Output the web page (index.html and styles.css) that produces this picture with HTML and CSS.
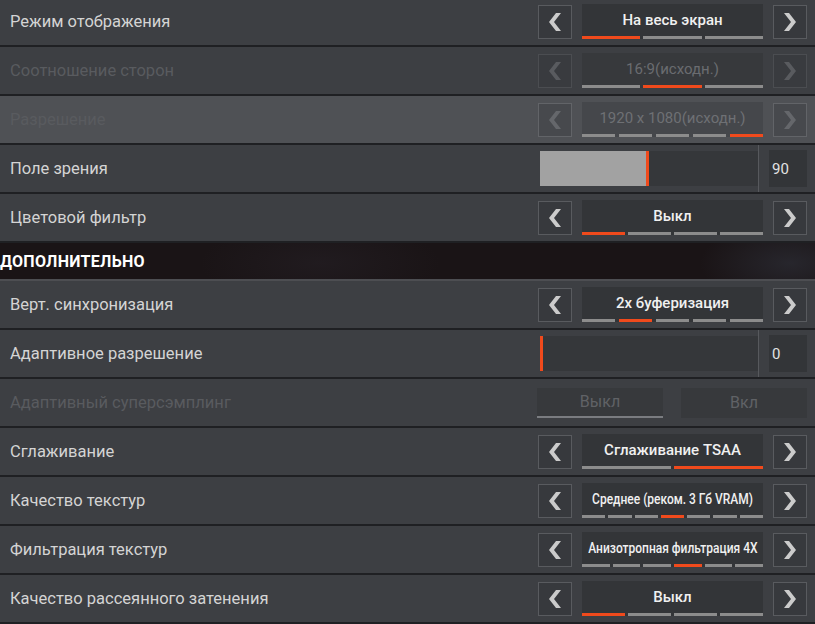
FILE: index.html
```html
<!DOCTYPE html>
<html lang="ru">
<head>
<meta charset="utf-8">
<title>Настройки видео</title>
<link rel="stylesheet" href="styles.css">
</head>
<body>
<div class="list">

  <div class="row">
    <span class="label">Режим отображения</span>
    <div class="cycle">
      <div class="arrow"><svg viewBox="0 0 12 18" width="12" height="18"><polygon points="12,0 7,0 0,9 7,18 12,18 5,9"/></svg></div>
      <div class="value"><span class="vtext">На весь экран</span><div class="segs"><i class="on"></i><i></i><i></i></div></div>
      <div class="arrow"><svg viewBox="0 0 12 18" width="12" height="18"><polygon points="0,0 5,0 12,9 5,18 0,18 7,9"/></svg></div>
    </div>
  </div>

  <div class="row dis">
    <span class="label">Соотношение сторон</span>
    <div class="cycle">
      <div class="arrow"><svg viewBox="0 0 12 18" width="12" height="18"><polygon points="12,0 7,0 0,9 7,18 12,18 5,9"/></svg></div>
      <div class="value"><span class="vtext">16:9(исходн.)</span><div class="segs"><i></i><i class="on"></i><i></i></div></div>
      <div class="arrow"><svg viewBox="0 0 12 18" width="12" height="18"><polygon points="0,0 5,0 12,9 5,18 0,18 7,9"/></svg></div>
    </div>
  </div>

  <div class="row dis hl">
    <span class="label">Разрешение</span>
    <div class="cycle">
      <div class="arrow"><svg viewBox="0 0 12 18" width="12" height="18"><polygon points="12,0 7,0 0,9 7,18 12,18 5,9"/></svg></div>
      <div class="value"><span class="vtext">1920 x 1080(исходн.)</span><div class="segs wide"><i></i><i></i><i></i><i></i><i class="on"></i></div></div>
      <div class="arrow"><svg viewBox="0 0 12 18" width="12" height="18"><polygon points="0,0 5,0 12,9 5,18 0,18 7,9"/></svg></div>
    </div>
  </div>

  <div class="row">
    <span class="label">Поле зрения</span>
    <div class="slider">
      <div class="track"><div class="fill" style="width:106px"></div><div class="thumb"></div></div>
      <div class="divider"></div>
      <div class="sval">90</div>
    </div>
  </div>

  <div class="row">
    <span class="label">Цветовой фильтр</span>
    <div class="cycle">
      <div class="arrow"><svg viewBox="0 0 12 18" width="12" height="18"><polygon points="12,0 7,0 0,9 7,18 12,18 5,9"/></svg></div>
      <div class="value"><span class="vtext">Выкл</span><div class="segs"><i class="on"></i><i></i><i></i><i></i></div></div>
      <div class="arrow"><svg viewBox="0 0 12 18" width="12" height="18"><polygon points="0,0 5,0 12,9 5,18 0,18 7,9"/></svg></div>
    </div>
  </div>

  <div class="head"><span>ДОПОЛНИТЕЛЬНО</span></div>

  <div class="row">
    <span class="label">Верт. синхронизация</span>
    <div class="cycle">
      <div class="arrow"><svg viewBox="0 0 12 18" width="12" height="18"><polygon points="12,0 7,0 0,9 7,18 12,18 5,9"/></svg></div>
      <div class="value"><span class="vtext">2x буферизация</span><div class="segs wide"><i></i><i class="on"></i><i></i><i></i><i></i></div></div>
      <div class="arrow"><svg viewBox="0 0 12 18" width="12" height="18"><polygon points="0,0 5,0 12,9 5,18 0,18 7,9"/></svg></div>
    </div>
  </div>

  <div class="row">
    <span class="label">Адаптивное разрешение</span>
    <div class="slider">
      <div class="track"><div class="fill" style="width:0px"></div><div class="thumb"></div></div>
      <div class="divider"></div>
      <div class="sval">0</div>
    </div>
  </div>

  <div class="row dis">
    <span class="label">Адаптивный суперсэмплинг</span>
    <div class="toggle">
      <div class="tbtn sel">Выкл</div>
      <div class="tbtn">Вкл</div>
    </div>
  </div>

  <div class="row">
    <span class="label">Сглаживание</span>
    <div class="cycle">
      <div class="arrow"><svg viewBox="0 0 12 18" width="12" height="18"><polygon points="12,0 7,0 0,9 7,18 12,18 5,9"/></svg></div>
      <div class="value"><span class="vtext">Сглаживание TSAA</span><div class="segs"><i></i><i class="on"></i></div></div>
      <div class="arrow"><svg viewBox="0 0 12 18" width="12" height="18"><polygon points="0,0 5,0 12,9 5,18 0,18 7,9"/></svg></div>
    </div>
  </div>

  <div class="row">
    <span class="label">Качество текстур</span>
    <div class="cycle">
      <div class="arrow"><svg viewBox="0 0 12 18" width="12" height="18"><polygon points="12,0 7,0 0,9 7,18 12,18 5,9"/></svg></div>
      <div class="value"><span class="vtext"><span class="cond">Среднее (реком. 3 Гб VRAM)</span></span><div class="segs"><i></i><i></i><i></i><i class="on"></i><i></i><i></i><i></i></div></div>
      <div class="arrow"><svg viewBox="0 0 12 18" width="12" height="18"><polygon points="0,0 5,0 12,9 5,18 0,18 7,9"/></svg></div>
    </div>
  </div>

  <div class="row">
    <span class="label">Фильтрация текстур</span>
    <div class="cycle">
      <div class="arrow"><svg viewBox="0 0 12 18" width="12" height="18"><polygon points="12,0 7,0 0,9 7,18 12,18 5,9"/></svg></div>
      <div class="value"><span class="vtext"><span class="cond">Анизотропная фильтрация 4X</span></span><div class="segs"><i></i><i></i><i></i><i class="on"></i><i></i><i></i></div></div>
      <div class="arrow"><svg viewBox="0 0 12 18" width="12" height="18"><polygon points="0,0 5,0 12,9 5,18 0,18 7,9"/></svg></div>
    </div>
  </div>

  <div class="row">
    <span class="label">Качество рассеянного затенения</span>
    <div class="cycle">
      <div class="arrow"><svg viewBox="0 0 12 18" width="12" height="18"><polygon points="12,0 7,0 0,9 7,18 12,18 5,9"/></svg></div>
      <div class="value"><span class="vtext">Выкл</span><div class="segs"><i class="on"></i><i></i><i></i><i></i></div></div>
      <div class="arrow"><svg viewBox="0 0 12 18" width="12" height="18"><polygon points="0,0 5,0 12,9 5,18 0,18 7,9"/></svg></div>
    </div>
  </div>

</div>
</body>
</html>
```

FILE: styles.css
```css
html, body {
  margin: 0;
  padding: 0;
}
body {
  width: 815px;
  height: 624px;
  overflow: hidden;
  background: #1e1f22;
  font-family: Roboto, "Liberation Sans", sans-serif;
}
.list {
  margin-top: -2px;
}
.row {
  display: flex;
  align-items: center;
  justify-content: space-between;
  height: 47px;
  border-bottom: 2px solid #1f2023;
  background: #3d3f43;
  padding: 0 8px 0 10px;
}
.row.hl {
  background: #4f5155;
}
.label {
  color: #d4d4d4;
  font-size: 16.5px;
  white-space: nowrap;
}
.row.dis .label {
  color: #595b5f;
}

/* cycle selector */
.cycle {
  display: flex;
  align-items: center;
  gap: 10px;
}
.arrow {
  width: 34px;
  height: 34px;
  box-sizing: border-box;
  border: 1px solid #595b5f;
  background: #37393d;
  display: flex;
  align-items: center;
  justify-content: center;
}
.arrow svg {
  fill: #cbcbcb;
  display: block;
}
.value {
  width: 181px;
  height: 35px;
  display: flex;
  flex-direction: column;
  background: #333538;
}
.vtext {
  flex: 1;
  display: flex;
  align-items: center;
  justify-content: center;
  color: #f0f0f0;
  font-size: 15px;
  font-weight: 500;
  white-space: nowrap;
}
.cond {
  display: inline-block;
  transform: scaleX(0.8);
}
.segs {
  display: flex;
  gap: 3px;
  height: 3px;
}
.segs.wide {
  gap: 4px;
}
.segs i {
  flex: 1;
  background: #8c8c8c;
}
.segs i.on {
  background: #f04a1c;
}

/* disabled */
.dis .arrow {
  border-color: #4b4d51;
  background: #393b3f;
}
.dis .arrow svg {
  fill: #595b5f;
}
.dis .vtext {
  color: #6a6c70;
  font-weight: 400;
}
.dis .value {
  background: #37393c;
}
.hl .arrow {
  border-color: #626468;
  background: #47494d;
}
.hl .arrow svg {
  fill: #65676b;
}
.hl .value {
  background: #45474b;
}
.hl .vtext {
  color: #6e7074;
}

/* slider */
.slider {
  align-self: stretch;
  display: flex;
  align-items: center;
}
.track {
  width: 218px;
  height: 35px;
  background: #35373a;
  display: flex;
}
.fill {
  background: #a2a2a2;
}
.thumb {
  width: 3px;
  background: #f04a1c;
}
.divider {
  align-self: stretch;
  width: 1px;
  background: #57595d;
  margin-right: 10px;
}
.sval {
  width: 38px;
  height: 37px;
  box-sizing: border-box;
  padding-left: 3px;
  background: #333538;
  color: #e2e2e2;
  font-size: 15px;
  display: flex;
  align-items: center;
}

/* toggle */
.toggle {
  display: flex;
  gap: 18px;
}
.tbtn {
  width: 126px;
  height: 30px;
  box-sizing: border-box;
  background: #37393c;
  color: #606266;
  font-size: 16px;
  display: flex;
  align-items: center;
  justify-content: center;
}
.tbtn.sel {
  border-bottom: 2px solid #7a7c80;
}

/* section header */
.head {
  height: 36px;
  border-bottom: 2px solid #4d4e52;
  background:
    radial-gradient(ellipse 90px 40px at 790px 20px, rgba(55, 60, 72, 0.45), transparent),
    radial-gradient(ellipse 120px 40px at 320px 20px, rgba(45, 40, 48, 0.35), transparent),
    #1a1416;
  display: flex;
  align-items: center;
  color: #ffffff;
  font-size: 16px;
  font-weight: 700;
  letter-spacing: 0.3px;
}
```
